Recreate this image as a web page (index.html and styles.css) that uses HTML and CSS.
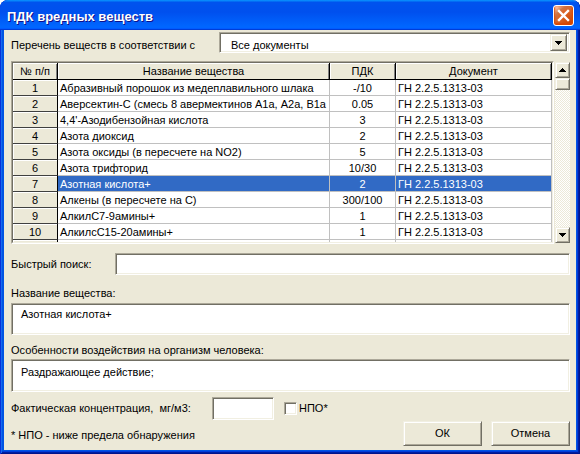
FILE: index.html
```html
<!DOCTYPE html>
<html lang="ru">
  <head>
    <meta charset="UTF-8" />
    <title>ПДК вредных веществ</title>
    <link rel="stylesheet" href="styles.css">
  </head>
  <body>
    <div class="window">
      <div class="titlebar">
        <span class="title">ПДК вредных веществ</span>
        <span class="close">
          <svg width="19" height="19" viewBox="0 0 19 19">
            <path d="M5 5L14 14M14 5L5 14" stroke="#fff" stroke-width="2.4" stroke-linecap="square" />
          </svg>
        </span>
      </div>

      <div class="client">
        <div class="doc-row">
          <span class="doc-label">Перечень веществ в соответствии с</span>
          <div class="combo sunken">
            <span class="combo-text">Все документы</span>
            <span class="combo-btn raised">
              <svg width="7" height="4" viewBox="0 0 7 4" shape-rendering="crispEdges"><path d="M0 0h7v1h-1v1h-1v1h-1v1h-1v-1h-1v-1h-1v-1h-1z" fill="#000"/></svg>
            </span>
          </div>
        </div>

        <div class="grid-row">
          <div class="grid">
            <div class="cells">
              <div class="hd">№ п/п</div><div class="hd">Название вещества</div><div class="hd">ПДК</div><div class="hd">Документ</div>

              <div class="fx">1</div><div class="cl">Абразивный порошок из медеплавильного шлака</div><div class="cl mid">-/10</div><div class="cl">ГН 2.2.5.1313-03</div>
              <div class="fx">2</div><div class="cl">Аверсектин-С (смесь 8 авермектинов А1а, А2а, В1а</div><div class="cl mid">0.05</div><div class="cl">ГН 2.2.5.1313-03</div>
              <div class="fx">3</div><div class="cl">4,4'-Азодибензойная кислота</div><div class="cl mid">3</div><div class="cl">ГН 2.2.5.1313-03</div>
              <div class="fx">4</div><div class="cl">Азота диоксид</div><div class="cl mid">2</div><div class="cl">ГН 2.2.5.1313-03</div>
              <div class="fx">5</div><div class="cl">Азота оксиды (в пересчете на NO2)</div><div class="cl mid">5</div><div class="cl">ГН 2.2.5.1313-03</div>
              <div class="fx">6</div><div class="cl">Азота трифторид</div><div class="cl mid">10/30</div><div class="cl">ГН 2.2.5.1313-03</div>
              <div class="fx">7</div><div class="cl sel">Азотная кислота+</div><div class="cl mid sel">2</div><div class="cl sel">ГН 2.2.5.1313-03</div>
              <div class="fx">8</div><div class="cl">Алкены (в пересчете на С)</div><div class="cl mid">300/100</div><div class="cl">ГН 2.2.5.1313-03</div>
              <div class="fx">9</div><div class="cl">АлкилС7-9амины+</div><div class="cl mid">1</div><div class="cl">ГН 2.2.5.1313-03</div>
              <div class="fx">10</div><div class="cl">АлкилсС15-20амины+</div><div class="cl mid">1</div><div class="cl">ГН 2.2.5.1313-03</div>
              <div class="fx"></div><div class="cl"></div><div class="cl"></div><div class="cl"></div>
            </div>
          </div>

          <div class="vscroll">
            <span class="sb-btn raised">
              <svg width="7" height="4" viewBox="0 0 7 4" shape-rendering="crispEdges"><path d="M3 0h1v1h1v1h1v1h1v1h-7v-1h1v-1h1v-1h1z" fill="#000"/></svg>
            </span>
            <span class="sb-thumb raised"></span>
            <span class="sb-track"></span>
            <span class="sb-btn raised">
              <svg width="7" height="4" viewBox="0 0 7 4" shape-rendering="crispEdges"><path d="M0 0h7v1h-1v1h-1v1h-1v1h-1v-1h-1v-1h-1v-1h-1z" fill="#000"/></svg>
            </span>
          </div>
        </div>

        <div class="search-row">
          <span>Быстрый поиск:</span>
          <div class="search sunken"></div>
        </div>

        <div class="field-label name-label">Название вещества:</div>
        <div class="memo sunken">Азотная кислота+</div>

        <div class="field-label effects-label">Особенности воздействия на организм человека:</div>
        <div class="memo memo-effects sunken">Раздражающее действие;</div>

        <div class="conc-row">
          <span class="conc-label">Фактическая концентрация,&nbsp; мг/м3:</span>
          <div class="conc sunken"></div>
          <span class="check sunken"></span>
          <span class="check-label">НПО*</span>
        </div>

        <div class="bottom-row">
          <span class="footnote">* НПО - ниже предела обнаружения</span>
          <div class="buttons">
            <button class="btn raised">ОК</button>
            <button class="btn raised">Отмена</button>
          </div>
        </div>
      </div>
    </div>
  </body>
</html>
```

FILE: styles.css
```css
html,
body {
  margin: 0;
  height: 100%;
}

body {
  background: #fff;
  font: 11px/13px "Liberation Sans", Arial, sans-serif;
  color: #000;
}

/* window frame */
.window {
  width: 580px;
  height: 454px;
  box-sizing: border-box;
  display: flex;
  flex-direction: column;
  padding: 0 4px 4px;
  background: #0054e3;
  border-radius: 8px 8px 0 0;
  box-shadow: inset 1px 0 #0831d9, inset -1px -1px #00138c, inset 2px 0 #166aee,
    inset -2px -2px #001ea0, inset -3px -3px #003bda;
  overflow: hidden;
}

.titlebar {
  height: 30px;
  flex: none;
  display: flex;
  margin: 0 -4px;
  padding: 0 6px 0 7px;
  background: linear-gradient(180deg, #0997ff, #0053ee 8%, #0050ee 40%, #06f 88%,
      #06f 93%, #005bff 95%, #003dd7 96%, #003dd7);
  border-radius: 8px 8px 0 0;
}

.title {
  padding-top: 4px;
  line-height: 26px;
  font-size: 13px;
  font-weight: bold;
  color: #fff;
  text-shadow: 1px 1px #0f1089;
}

.close {
  margin: 5px 0 0 auto;
  width: 21px;
  height: 21px;
  box-sizing: border-box;
  border: 1px solid #fff;
  border-radius: 3px;
  background: radial-gradient(circle at 90% 90%, #cc4600 0, #dc6527 55%, #cd7546 70%,
      #ffccb2 90%, #fff 100%);
  box-shadow: inset 0 -1px 2px 1px #da4600;
}

.close svg {
  display: block;
}

.client {
  flex: 1;
  padding: 0 6px 0 7px;
  background: #ece9d8;
}

/* classic 3d edges */
.sunken {
  box-sizing: border-box;
  border: 1px solid;
  border-color: #aca899 #fff #fff #aca899;
  box-shadow: inset 1px 1px #716f64, inset -1px -1px #f1efe2;
  background: #fff;
}

.raised {
  box-sizing: border-box;
  border: 1px solid;
  border-color: #f1efe2 #716f64 #716f64 #f1efe2;
  box-shadow: inset 1px 1px #fff, inset -1px -1px #aca899;
  background: #ece9d8;
}

/* document selector */
.doc-row {
  display: flex;
  margin-top: 2px;
}

.doc-label {
  margin-top: 7px;
}

.combo {
  display: flex;
  width: 351px;
  height: 21px;
  margin-left: auto;
  padding: 1px;
}

.combo-text {
  flex: 1;
  padding: 3px 0 0 10px;
  line-height: 17px;
}

.combo-btn {
  width: 17px;
  height: 17px;
  display: flex;
  align-items: center;
  justify-content: center;
  margin-right: 1px;
}

/* substances grid */
.grid-row {
  display: flex;
  align-items: flex-start;
  margin-top: 8px;
}

.grid {
  width: 543px;
  height: 183px;
  box-sizing: border-box;
  border: 1px solid;
  border-color: #aca899 #fff #fff #aca899;
  background: #fff;
}

.cells {
  height: 181px;
  box-sizing: border-box;
  border: 1px solid;
  border-color: #716f64 #f1efe2 #f1efe2 #716f64;
  overflow: hidden;
  display: grid;
  grid-template-columns: 45px 272px 66px 156px;
  grid-template-rows: 17px;
  grid-auto-rows: 16px;
}

.hd,
.fx,
.cl {
  box-sizing: border-box;
  overflow: hidden;
  white-space: nowrap;
}

.hd {
  text-align: center;
  line-height: 16px;
  background: #ece9d8;
  border-right: 1px solid #000;
  border-bottom: 1px solid #000;
  box-shadow: inset 1px 1px #fff, inset -1px 0 #808080;
}

.fx {
  text-align: center;
  padding-top: 1px;
  line-height: 15px;
  background: #ece9d8;
  border-right: 1px solid #000;
  border-bottom: 1px solid #404040;
  box-shadow: inset 1px 1px #fff;
}

.cl {
  padding: 1px 0 0 2px;
  line-height: 15px;
  border-right: 1px solid #c0c0c0;
  border-bottom: 1px solid #c0c0c0;
}

.cl.mid {
  text-align: center;
  padding-left: 0;
}

.cl.sel {
  background: #316ac5;
  color: #fff;
}

.vscroll {
  width: 15px;
  height: 181px;
  margin: 1px 0 0 1px;
  display: flex;
  flex-direction: column;
}

.sb-btn {
  height: 16px;
  flex: none;
  display: flex;
  align-items: center;
  justify-content: center;
}

.sb-thumb {
  height: 12px;
  flex: none;
}

.sb-track {
  flex: 1;
  background: repeating-conic-gradient(#ece9d8 0 25%, #fff 0 50%) 0 0 / 2px 2px;
}

/* fields */
.search-row {
  display: flex;
  align-items: center;
  margin-top: 9px;
}

.search {
  width: 455px;
  height: 22px;
  margin-left: auto;
}

.name-label {
  margin-top: 12px;
}

.effects-label {
  margin-top: 9px;
}

.memo {
  height: 32px;
  margin-top: 3px;
  padding: 4px 9px 0;
}

.memo-effects {
  height: 33px;
  margin-top: 2px;
  padding-top: 6px;
}

.conc-row {
  display: flex;
  align-items: center;
  margin-top: 5px;
}

.conc-label {
  width: 201px;
  flex: none;
}

.conc {
  width: 62px;
  height: 23px;
}

.check {
  width: 13px;
  height: 13px;
  margin-left: 10px;
}

.check-label {
  margin-left: 2px;
}

.bottom-row {
  display: flex;
  align-items: center;
  margin-top: 1px;
}

.footnote {
  padding-top: 3px;
}

.buttons {
  display: flex;
  gap: 9px;
  margin-left: auto;
}

.btn {
  width: 79px;
  height: 25px;
  padding: 0;
  font: inherit;
  color: #000;
}
```
